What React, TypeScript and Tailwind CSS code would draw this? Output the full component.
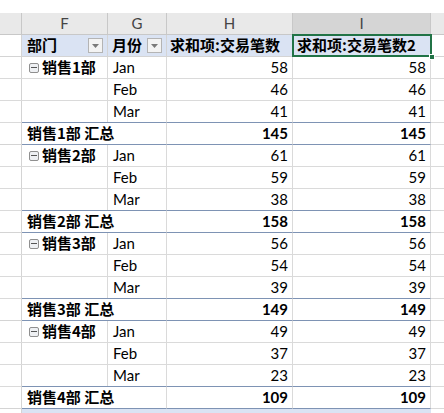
import * as React from "react";

// ---------------------------------------------------------------------------
// Data
// ---------------------------------------------------------------------------

const groups = [
  { name: "销售1部", rows: [["Jan", 58], ["Feb", 46], ["Mar", 41]], total: 145 },
  { name: "销售2部", rows: [["Jan", 61], ["Feb", 59], ["Mar", 38]], total: 158 },
  { name: "销售3部", rows: [["Jan", 56], ["Feb", 54], ["Mar", 39]], total: 149 },
  { name: "销售4部", rows: [["Jan", 49], ["Feb", 37], ["Mar", 23]], total: 109 },
] as const;

const font = "font-['Lato','Noto_Sans_CJK_SC',sans-serif]";
const cjk = "font-['Noto_Sans_CJK_SC','Lato',sans-serif]";

// ---------------------------------------------------------------------------
// Small parts
// ---------------------------------------------------------------------------

function FilterButton() {
  return (
    <span className="mr-[4px] flex h-[15px] w-[15px] items-center justify-center border border-[#b4b4b4] bg-[#f3f3f3]">
      <svg width="7" height="4" viewBox="0 0 7 4">
        <path d="M0 0h7L3.5 4z" fill="#7a7a7a" />
      </svg>
    </span>
  );
}

function Collapse() {
  return (
    <span className="mr-[3px] ml-[7px] flex h-[10px] w-[10px] items-center justify-center rounded-[2px] border border-[#8f8f8f] bg-[#eef0f3]">
      <span className="h-px w-[6px] bg-[#555]" />
    </span>
  );
}

// ---------------------------------------------------------------------------
// Sheet
// ---------------------------------------------------------------------------

export default function App() {
  return (
    <div className={`h-[413px] w-[444px] overflow-hidden bg-white text-[15px] text-black ${font}`}>
      <div className="h-[13px] bg-white" />

      {/* Column letters */}
      <div className="flex h-[22px] border-b border-[#c8c8c8] bg-[#e9e9e9] text-[#444]">
        <div className="w-[22px] shrink-0 border-r border-[#c8c8c8]" />
        <div className="flex w-[86px] shrink-0 items-center justify-center border-r border-[#c8c8c8]">F</div>
        <div className="flex w-[59px] shrink-0 items-center justify-center border-r border-[#c8c8c8]">G</div>
        <div className="flex w-[126px] shrink-0 items-center justify-center border-r border-[#c8c8c8]">H</div>
        <div className="flex w-[138px] shrink-0 items-center justify-center border-r border-[#c8c8c8] bg-[#d5d5d5]">I</div>
        <div className="flex-1" />
      </div>

      {/* Pivot header */}
      <div className={`flex h-[22px] border-b border-[#d4d4d4] font-bold ${cjk}`}>
        <div className="w-[22px] shrink-0 border-r border-[#d4d4d4] bg-white" />
        <div className="flex w-[86px] shrink-0 items-center justify-between border-r border-[#d4d4d4] bg-[#dae3f3] pl-[5px]">
          <span>部门</span>
          <FilterButton />
        </div>
        <div className="flex w-[59px] shrink-0 items-center justify-between border-r border-[#d4d4d4] bg-[#dae3f3] pl-[4px]">
          <span>月份</span>
          <FilterButton />
        </div>
        <div className="flex w-[126px] shrink-0 items-center border-r border-[#d4d4d4] bg-[#dae3f3] pl-[3px]">
          求和项:交易笔数
        </div>
        <div className="relative flex w-[138px] shrink-0 items-center bg-[#dae3f3] pl-[4px]">
          求和项:交易笔数2
          <span className="absolute -top-px -left-px -right-px -bottom-px border-2 border-[#217346]" />
          <span className="absolute -right-[4px] -bottom-[4px] h-[6px] w-[6px] border border-white bg-[#217346]" />
        </div>
        <div className="flex-1 border-l border-[#d4d4d4]" />
      </div>

      {groups.map((g) => (
        <React.Fragment key={g.name}>
          {g.rows.map(([m, v], i) => (
            <div key={m} className="flex h-[22px] border-b border-[#dadada]">
              <div className="w-[22px] shrink-0 border-r border-[#d4d4d4]" />
              <div className={`flex w-[86px] shrink-0 items-center border-r border-[#dadada] font-bold ${cjk}`}>
                {i === 0 && (
                  <>
                    <Collapse />
                    <span>{g.name}</span>
                  </>
                )}
              </div>
              <div className="flex w-[59px] shrink-0 items-center border-r border-[#dadada] pl-[5px]">{m}</div>
              <div className="flex w-[126px] shrink-0 items-center justify-end border-r border-[#dadada] pr-[4px]">{v}</div>
              <div className="flex w-[138px] shrink-0 items-center justify-end border-r border-[#dadada] pr-[4px]">{v}</div>
              <div className="flex-1" />
            </div>
          ))}

          {/* Subtotal */}
          <div className="-mt-px flex h-[23px] font-bold">
            <div className="w-[22px] shrink-0 border-r border-b border-[#d4d4d4] border-t-transparent" />
            <div className={`flex w-[145px] shrink-0 items-center border-y border-r border-[#7e93b4] border-r-[#dadada] pl-[5px] ${cjk}`}>
              {g.name} 汇总
            </div>
            <div className="flex w-[126px] shrink-0 items-center justify-end border-y border-r border-[#7e93b4] border-r-[#dadada] pr-[4px]">
              {g.total}
            </div>
            <div className="flex w-[138px] shrink-0 items-center justify-end border-y border-r border-[#7e93b4] border-r-[#dadada] pr-[4px]">
              {g.total}
            </div>
            <div className="flex-1 border-b border-[#dadada]" />
          </div>
        </React.Fragment>
      ))}

      {/* Grand total (cut off) */}
      <div className="flex h-[22px]">
        <div className="w-[22px] shrink-0 border-r border-[#d4d4d4]" />
        <div className="w-[409px] shrink-0 bg-[#dae3f3]" />
      </div>
    </div>
  );
}
